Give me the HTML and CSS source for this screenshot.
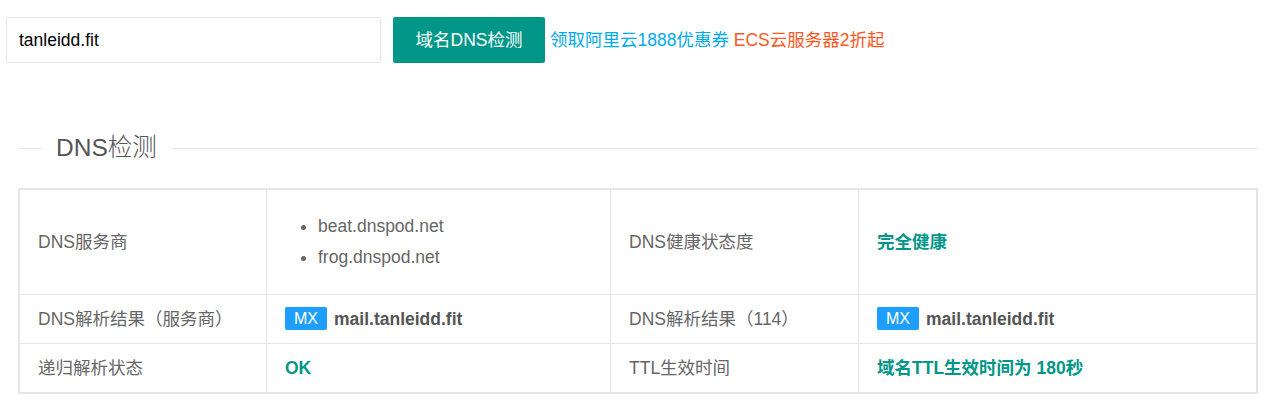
FILE: index.html
```html
<!DOCTYPE html>
<html lang="zh-CN">
<head>
  <meta charset="UTF-8">
  <title>DNS检测</title>
  <link rel="stylesheet" href="styles.css">
</head>
<body>
  <form class="search-bar" onsubmit="return false">
    <input class="search-input" type="text" value="tanleidd.fit">
    <button class="btn">域名DNS检测</button>
    <a href="#" class="promo">领取阿里云1888优惠券 <span class="promo-hot">ECS云服务器2折起</span></a>
  </form>

  <div class="field-title">
    <span class="field-line short"></span>
    <span class="legend">DNS检测</span>
    <span class="field-line"></span>
  </div>

  <div class="table-wrap">
    <table class="result-table">
      <colgroup>
        <col class="col-label">
        <col class="col-value">
        <col class="col-label2">
        <col>
      </colgroup>
      <tbody>
        <tr>
          <td>DNS服务商</td>
          <td>
            <ul class="ns-list">
              <li>beat.dnspod.net</li>
              <li>frog.dnspod.net</li>
            </ul>
          </td>
          <td>DNS健康状态度</td>
          <td><b class="ok">完全健康</b></td>
        </tr>
        <tr>
          <td>DNS解析结果（服务商）</td>
          <td><span class="badge">MX</span><b class="host">mail.tanleidd.fit</b></td>
          <td>DNS解析结果（114）</td>
          <td><span class="badge">MX</span><b class="host">mail.tanleidd.fit</b></td>
        </tr>
        <tr>
          <td>递归解析状态</td>
          <td><b class="ok">OK</b></td>
          <td>TTL生效时间</td>
          <td><b class="ok">域名TTL生效时间为 180秒</b></td>
        </tr>
      </tbody>
    </table>
  </div>
</body>
</html>
```

FILE: styles.css
```css
:root {
  --green: #009688;
  --blue: #1E9FFF;
  --link: #01AAED;
  --orange: #FF5722;
  --line: #e6e6e6;
  --text: #666;
}
* { box-sizing: border-box; }
body { margin: 0; background: #fff; color: var(--text); font: 17.5px/1.5 "Liberation Sans", "Noto Sans CJK SC", sans-serif; }

.search-bar { display: flex; align-items: center; padding: 17px 0 0 6px; margin: 0; }
.search-input { width: 375px; height: 46px; padding: 0 12px; border: 1px solid var(--line); border-radius: 2px; font: inherit; color: #000; outline: none; }
.btn { margin-left: 12px; width: 152px; height: 46px; border: none; border-radius: 2px; background: var(--green); color: #fff; font: inherit; cursor: pointer; }
.promo { margin-left: 5px; color: var(--link); text-decoration: none; }
.promo-hot { color: var(--orange); }

.field-title { display: flex; align-items: center; margin: 70px 14px 0 18px; }
.field-line { flex: 1; border-top: 1px solid var(--line); }
.field-line.short { flex: 0 0 24px; }
.legend { padding: 0 15px 0 14px; font-size: 24.5px; line-height: 30px; font-weight: 300; color: #555; }

.table-wrap { margin: 25px 14px 0 18px; border: 1px solid var(--line); }
.result-table { width: 100%; table-layout: fixed; border-collapse: collapse; }
.col-label { width: 247px; }
.col-value { width: 344px; }
.col-label2 { width: 248px; }
.result-table td { padding: 11px 18px; border: 1px solid var(--line); line-height: 26px; vertical-align: middle; white-space: nowrap; }

.ns-list { margin: 0; padding: 10px 0 10px 33px; }
.ns-list li { line-height: 31px; }

.ok { color: var(--green); }
.host { color: #555; }
.badge { display: inline-block; height: 23px; padding: 0 9px; margin-right: 7px; border-radius: 2px; background: var(--blue); color: #fff; font-size: 16px; line-height: 23px; vertical-align: 1px; }
```
